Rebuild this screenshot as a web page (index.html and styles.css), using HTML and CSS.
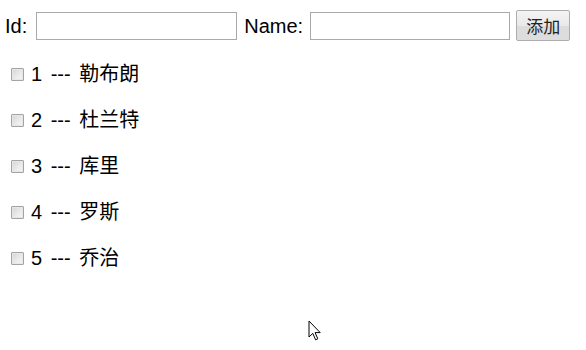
FILE: index.html
```html
<!DOCTYPE html>
<html lang="zh">
<head>
<meta charset="utf-8">
<title>List</title>
<link rel="stylesheet" href="styles.css">
</head>
<body>
<div class="app">
  <div class="form">
    <span class="label">Id:</span>
    <input class="field field-id" type="text">
    <span class="label label-name">Name:</span>
    <input class="field field-name" type="text">
    <button class="btn" type="button">添加</button>
  </div>
  <div class="list">
    <div class="row"><input class="check" type="checkbox"><span class="txt">1 --- 勒布朗</span></div>
    <div class="row"><input class="check" type="checkbox"><span class="txt">2 --- 杜兰特</span></div>
    <div class="row"><input class="check" type="checkbox"><span class="txt">3 --- 库里</span></div>
    <div class="row"><input class="check" type="checkbox"><span class="txt">4 --- 罗斯</span></div>
    <div class="row"><input class="check" type="checkbox"><span class="txt">5 --- 乔治</span></div>
  </div>
</div>
<svg class="cursor" width="14" height="22" viewBox="0 0 14 22">
  <path d="M1 1 L1 17 L4.8 13.4 L7.6 19.8 L9.8 18.8 L7.1 12.6 L12.2 12.6 Z" fill="#fff" stroke="#000" stroke-width="1" stroke-linejoin="miter"/>
</svg>
</body>
</html>
```

FILE: styles.css
```css
html, body {
  margin: 0;
  padding: 0;
  background: #fff;
}
body {
  font-family: "Liberation Sans", "Noto Sans CJK SC", sans-serif;
  color: #000;
  font-size: 20px;
}
.app {
  padding: 10px 0 0 5px;
}
.form {
  display: flex;
  align-items: center;
  height: 31px;
}
.label {
  line-height: 28px;
}
.field {
  box-sizing: border-box;
  height: 28px;
  border: 1px solid #a9a9a9;
  border-radius: 0;
  padding: 0 2px;
  margin: 0;
  font-size: 16px;
  background: #fff;
  outline: none;
}
.field-id {
  width: 201px;
  margin-left: 9px;
}
.label-name {
  margin-left: 7px;
}
.field-name {
  width: 200px;
  margin-left: 7px;
}
.btn {
  box-sizing: border-box;
  height: 31px;
  width: 54px;
  margin-left: 6px;
  padding: 0;
  border: 1px solid #adadad;
  border-radius: 2px;
  background: linear-gradient(#f4f4f4, #e9e9e9 50%, #dcdcdc 51%, #dddddd);
  font-family: "Noto Sans CJK SC", "Liberation Sans", sans-serif;
  font-size: 17px;
  color: #222;
}
.list {
  display: flex;
  flex-direction: column;
  gap: 18px;
  margin-top: 19px;
}
.row {
  display: flex;
  align-items: center;
  height: 28px;
  line-height: 28px;
}
.check {
  appearance: none;
  -webkit-appearance: none;
  box-sizing: border-box;
  width: 13px;
  height: 13px;
  margin: 0 7px 0 6px;
  border: 1px solid #a4a4a4;
  border-radius: 1px;
  background: linear-gradient(135deg, #d4d4d4, #ececec 60%, #f6f6f6);
  box-shadow: inset 0 0 0 1px #e6e6e6;
}
.txt {
  word-spacing: 3px;
}
.cursor {
  position: absolute;
  left: 308px;
  top: 320px;
}
```
